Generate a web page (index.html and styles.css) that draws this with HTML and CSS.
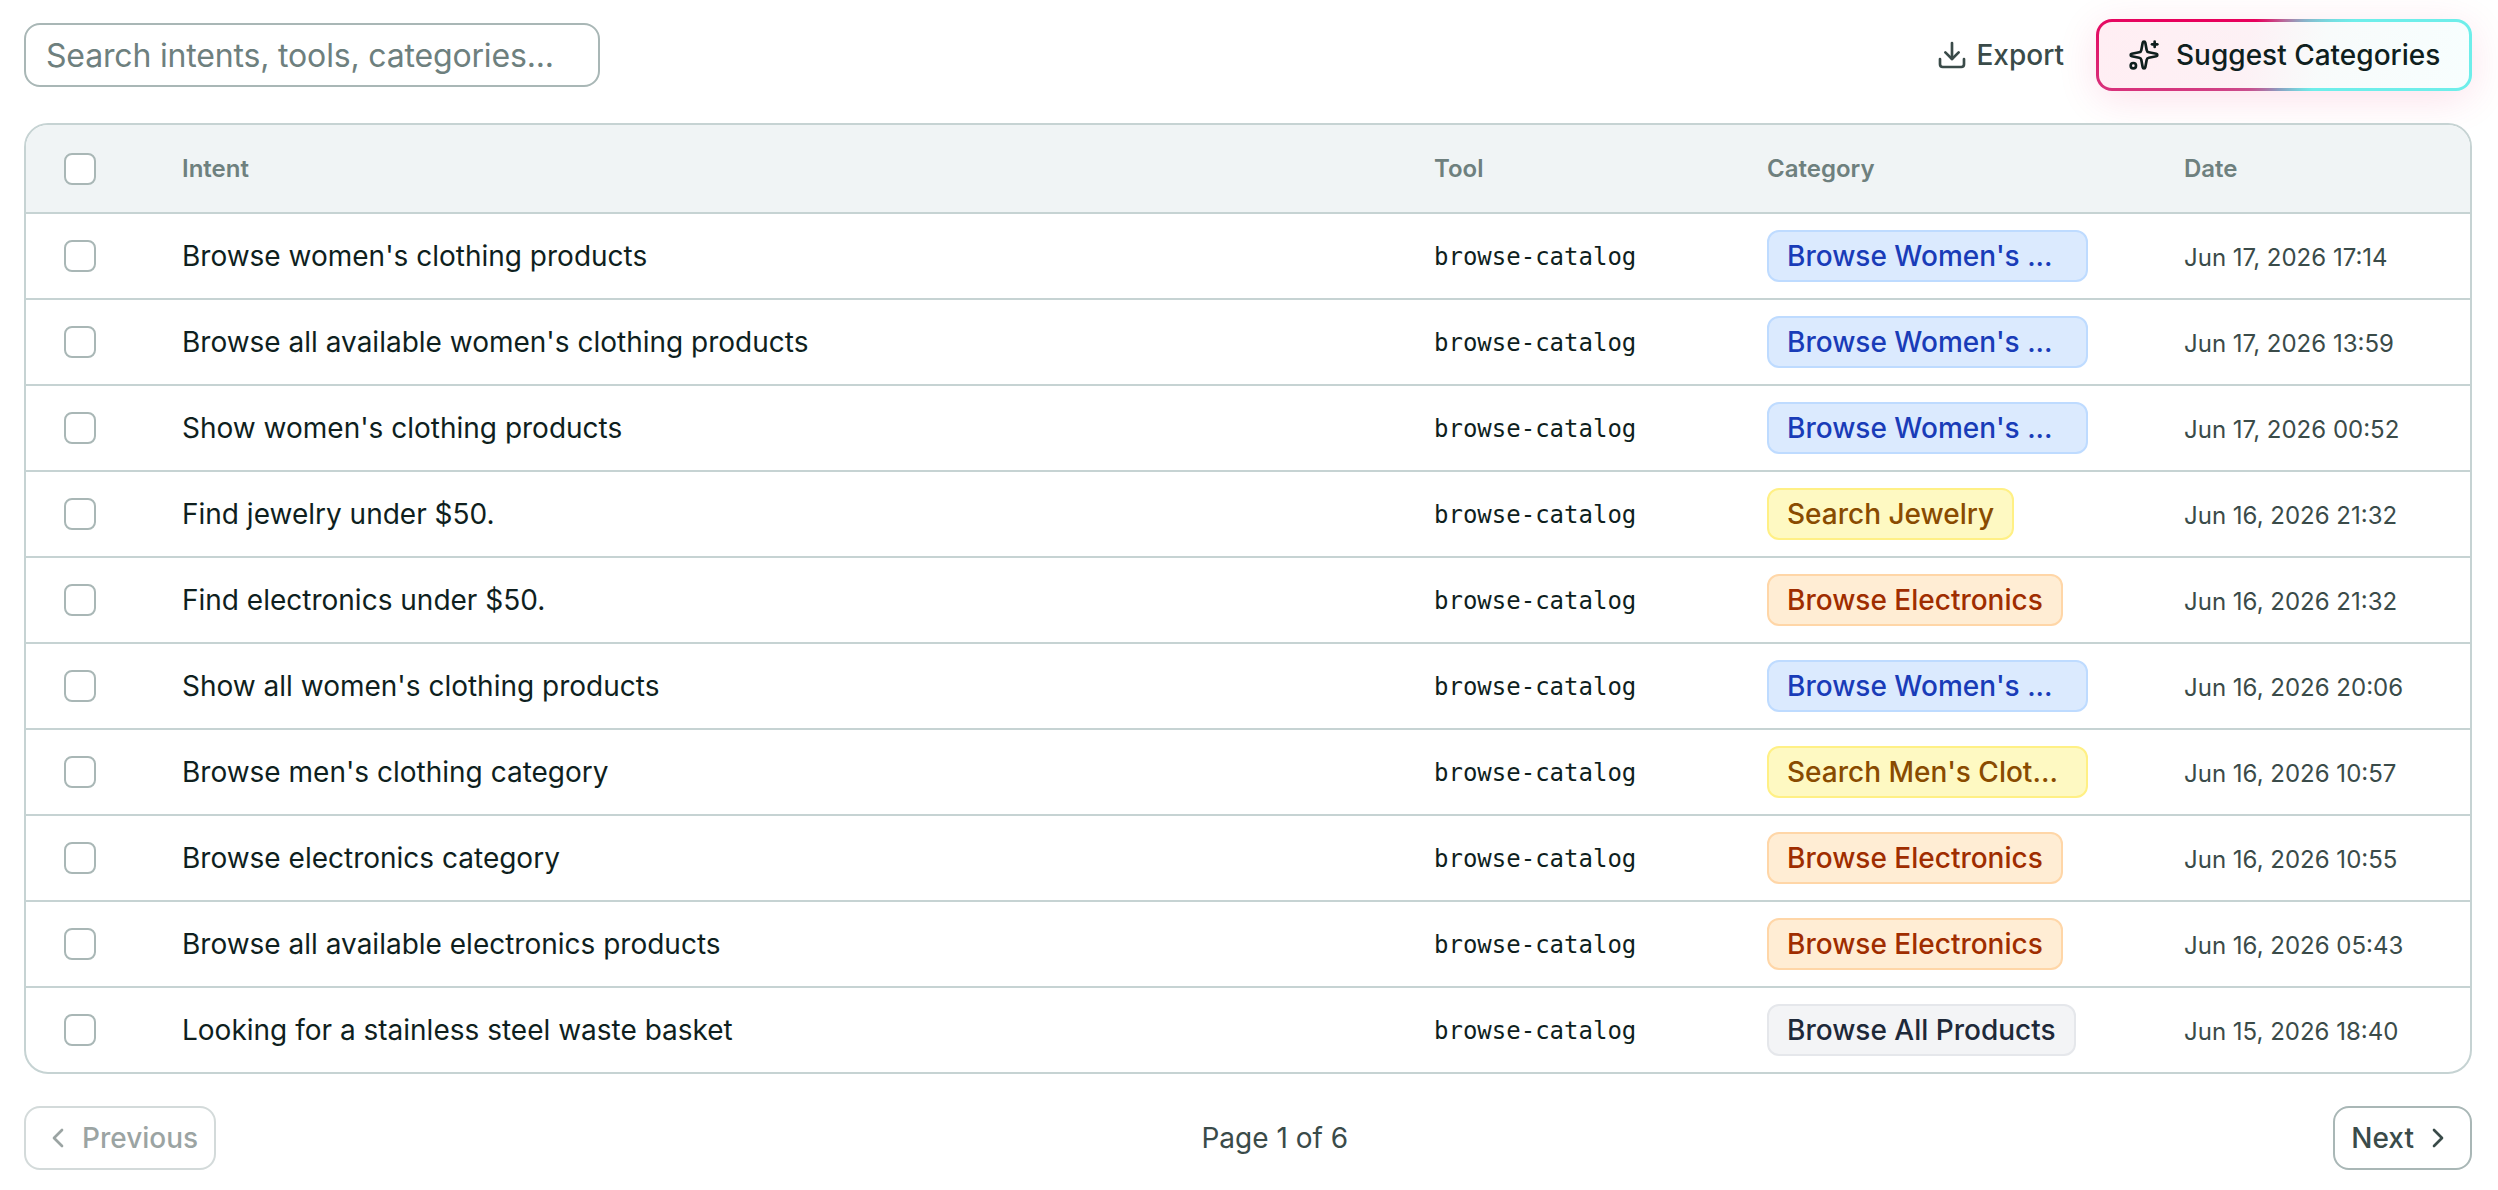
FILE: index.html
```html
<!DOCTYPE html>
<html lang="en">
<head>
    <meta charset="UTF-8">
    <meta name="viewport" content="width=device-width, initial-scale=1.0">
    <title>Intents</title>
    <link rel="stylesheet" href="styles.css">
</head>
<body>
    <div class="toolbar">
        <input type="text" class="search" placeholder="Search intents, tools, categories...">
        <div class="actions">
            <button class="export">
                <svg class="icon" viewBox="0 0 24 24"><path d="M12 3v12"/><path d="m7 10 5 5 5-5"/><path d="M21 15v4a2 2 0 0 1-2 2H5a2 2 0 0 1-2-2v-4"/></svg>
                Export
            </button>
            <button class="suggest">
                <svg class="icon" viewBox="0 0 24 24"><path d="M11.017 2.814a1 1 0 0 1 1.966 0l1.051 5.558a2 2 0 0 0 1.594 1.594l5.558 1.051a1 1 0 0 1 0 1.966l-5.558 1.051a2 2 0 0 0-1.594 1.594l-1.051 5.558a1 1 0 0 1-1.966 0l-1.051-5.558a2 2 0 0 0-1.594-1.594l-5.558-1.051a1 1 0 0 1 0-1.966l5.558-1.051a2 2 0 0 0 1.594-1.594z"/><path d="M20 2v4"/><path d="M22 4h-4"/><circle cx="4" cy="20" r="2"/></svg>
                Suggest Categories
            </button>
        </div>
    </div>

    <div class="table-wrap">
        <table>
            <colgroup>
                <col class="col-check">
                <col class="col-intent">
                <col class="col-tool">
                <col class="col-category">
                <col class="col-date">
            </colgroup>
            <thead>
                <tr>
                    <th class="check"><input type="checkbox"></th>
                    <th>Intent</th>
                    <th>Tool</th>
                    <th>Category</th>
                    <th>Date</th>
                </tr>
            </thead>
            <tbody>
                <tr>
                    <td class="check"><input type="checkbox"></td>
                    <td>Browse women's clothing products</td>
                    <td class="tool">browse-catalog</td>
                    <td><span class="badge blue">Browse Women's ...</span></td>
                    <td class="date">Jun 17, 2026 17:14</td>
                </tr>
                <tr>
                    <td class="check"><input type="checkbox"></td>
                    <td>Browse all available women's clothing products</td>
                    <td class="tool">browse-catalog</td>
                    <td><span class="badge blue">Browse Women's ...</span></td>
                    <td class="date">Jun 17, 2026 13:59</td>
                </tr>
                <tr>
                    <td class="check"><input type="checkbox"></td>
                    <td>Show women's clothing products</td>
                    <td class="tool">browse-catalog</td>
                    <td><span class="badge blue">Browse Women's ...</span></td>
                    <td class="date">Jun 17, 2026 00:52</td>
                </tr>
                <tr>
                    <td class="check"><input type="checkbox"></td>
                    <td>Find jewelry under $50.</td>
                    <td class="tool">browse-catalog</td>
                    <td><span class="badge yellow">Search Jewelry</span></td>
                    <td class="date">Jun 16, 2026 21:32</td>
                </tr>
                <tr>
                    <td class="check"><input type="checkbox"></td>
                    <td>Find electronics under $50.</td>
                    <td class="tool">browse-catalog</td>
                    <td><span class="badge orange">Browse Electronics</span></td>
                    <td class="date">Jun 16, 2026 21:32</td>
                </tr>
                <tr>
                    <td class="check"><input type="checkbox"></td>
                    <td>Show all women's clothing products</td>
                    <td class="tool">browse-catalog</td>
                    <td><span class="badge blue">Browse Women's ...</span></td>
                    <td class="date">Jun 16, 2026 20:06</td>
                </tr>
                <tr>
                    <td class="check"><input type="checkbox"></td>
                    <td>Browse men's clothing category</td>
                    <td class="tool">browse-catalog</td>
                    <td><span class="badge yellow wide">Search Men's Clot...</span></td>
                    <td class="date">Jun 16, 2026 10:57</td>
                </tr>
                <tr>
                    <td class="check"><input type="checkbox"></td>
                    <td>Browse electronics category</td>
                    <td class="tool">browse-catalog</td>
                    <td><span class="badge orange">Browse Electronics</span></td>
                    <td class="date">Jun 16, 2026 10:55</td>
                </tr>
                <tr>
                    <td class="check"><input type="checkbox"></td>
                    <td>Browse all available electronics products</td>
                    <td class="tool">browse-catalog</td>
                    <td><span class="badge orange">Browse Electronics</span></td>
                    <td class="date">Jun 16, 2026 05:43</td>
                </tr>
                <tr>
                    <td class="check"><input type="checkbox"></td>
                    <td>Looking for a stainless steel waste basket</td>
                    <td class="tool">browse-catalog</td>
                    <td><span class="badge gray">Browse All Products</span></td>
                    <td class="date">Jun 15, 2026 18:40</td>
                </tr>
            </tbody>
        </table>
    </div>

    <div class="pagination">
        <button class="page-btn" disabled>
            <svg class="icon" viewBox="0 0 24 24"><path d="m15 18-6-6 6-6"/></svg>
            Previous
        </button>
        <span>Page 1 of 6</span>
        <button class="page-btn">
            Next
            <svg class="icon" viewBox="0 0 24 24"><path d="m9 18 6-6-6-6"/></svg>
        </button>
    </div>
</body>
</html>
```

FILE: styles.css
```css
* {
    box-sizing: border-box;
}

body {
    margin: 0;
    padding: 19px 26px 0 24px;
    background: #fff;
    color: #0f1f1e;
    font-family: Inter, sans-serif;
    font-size: 28px;
}

button {
    display: flex;
    align-items: center;
    padding: 0;
    border: none;
    background: none;
    font-family: inherit;
    font-size: 28px;
    font-weight: 500;
    color: #3a4b49;
    white-space: nowrap;
}

.icon {
    flex: none;
    width: 32px;
    height: 32px;
    fill: none;
    stroke: currentColor;
    stroke-width: 2;
    stroke-linecap: round;
    stroke-linejoin: round;
}

.toolbar,
.actions,
.pagination {
    display: flex;
    align-items: center;
    justify-content: space-between;
}

.toolbar {
    height: 72px;
    margin-bottom: 32px;
}

.search {
    width: 576px;
    height: 64px;
    padding: 0 20px;
    border: 2px solid #a9b7b6;
    border-radius: 16px;
    font-family: inherit;
    font-size: 32px;
    letter-spacing: -0.17px;
}

.search::placeholder {
    color: #6e807e;
}

.actions {
    gap: 32px;
}

.export {
    gap: 8px;
}

.suggest {
    width: 376px;
    height: 72px;
    padding-left: 29px;
    gap: 16px;
    border: 3px solid transparent;
    border-radius: 16px;
    color: #0f1f1e;
    background:
        linear-gradient(100deg, #ffeef3 0%, #fdf1f5 40%, #f8fbfb 60%, #f7fefe 100%) padding-box,
        conic-gradient(#b86a9c 0deg, #8ab0c8 30deg, #6eeeea 64deg, #6eeeea 140deg, #8c9cc0 190deg, #c8508f 225deg, #d8307a 260deg, #e8005c 285deg, #e8005c 320deg, #b86a9c 360deg) border-box;
    box-shadow: 0 8px 40px rgba(229, 0, 92, 0.12);
}

.table-wrap {
    position: relative;
    border: 2px solid #c6d3d3;
    border-radius: 24px;
    overflow: hidden;
    background: #fff;
}

table {
    width: 100%;
    table-layout: fixed;
    border-collapse: separate;
    border-spacing: 0;
}

.col-check {
    width: 132px;
}

.col-tool {
    width: 333px;
}

.col-category {
    width: 417px;
}

.col-date {
    width: 310px;
}

th,
td {
    height: 86px;
    padding: 0 0 0 24px;
    border-bottom: 2px solid #c6d3d3;
    text-align: left;
    vertical-align: middle;
    white-space: nowrap;
}

th {
    height: 89px;
    background: #f0f4f5;
    color: #6e807e;
    font-size: 24px;
    font-weight: 600;
}

tr:last-child td {
    height: 84px;
    border-bottom: none;
}

.check {
    padding-left: 38px;
}

input[type="checkbox"] {
    display: block;
    appearance: none;
    width: 32px;
    height: 32px;
    margin: 0;
    border: 2px solid #a9b7b6;
    border-radius: 8px;
    background: #fff;
}

.tool,
.date {
    padding-top: 2px;
    font-size: 24px;
}

.tool {
    font-family: "DejaVu Sans Mono", monospace;
}

.date {
    color: #3a4b49;
}

.badge {
    display: block;
    width: fit-content;
    height: 52px;
    padding: 0 18px;
    border: 2px solid;
    border-radius: 12px;
    font-weight: 500;
    line-height: 48px;
}

.blue {
    width: 321px;
    background: #dbeafe;
    border-color: #bedbff;
    color: #193cb8;
}

.yellow {
    background: #fef9c2;
    border-color: #fff085;
    color: #894b00;
}

.orange {
    background: #ffedd4;
    border-color: #ffd6a7;
    color: #9f2d00;
}

.gray {
    background: #f3f4f6;
    border-color: #e5e7eb;
    color: #1e2939;
}

.wide {
    width: 321px;
}

.pagination {
    margin-top: 32px;
    color: #3a4b49;
}

.page-btn {
    height: 64px;
    padding: 0 16px;
    gap: 8px;
    border: 2px solid #a9b7b6;
    border-radius: 16px;
}

.page-btn:disabled {
    opacity: 0.5;
}
```
